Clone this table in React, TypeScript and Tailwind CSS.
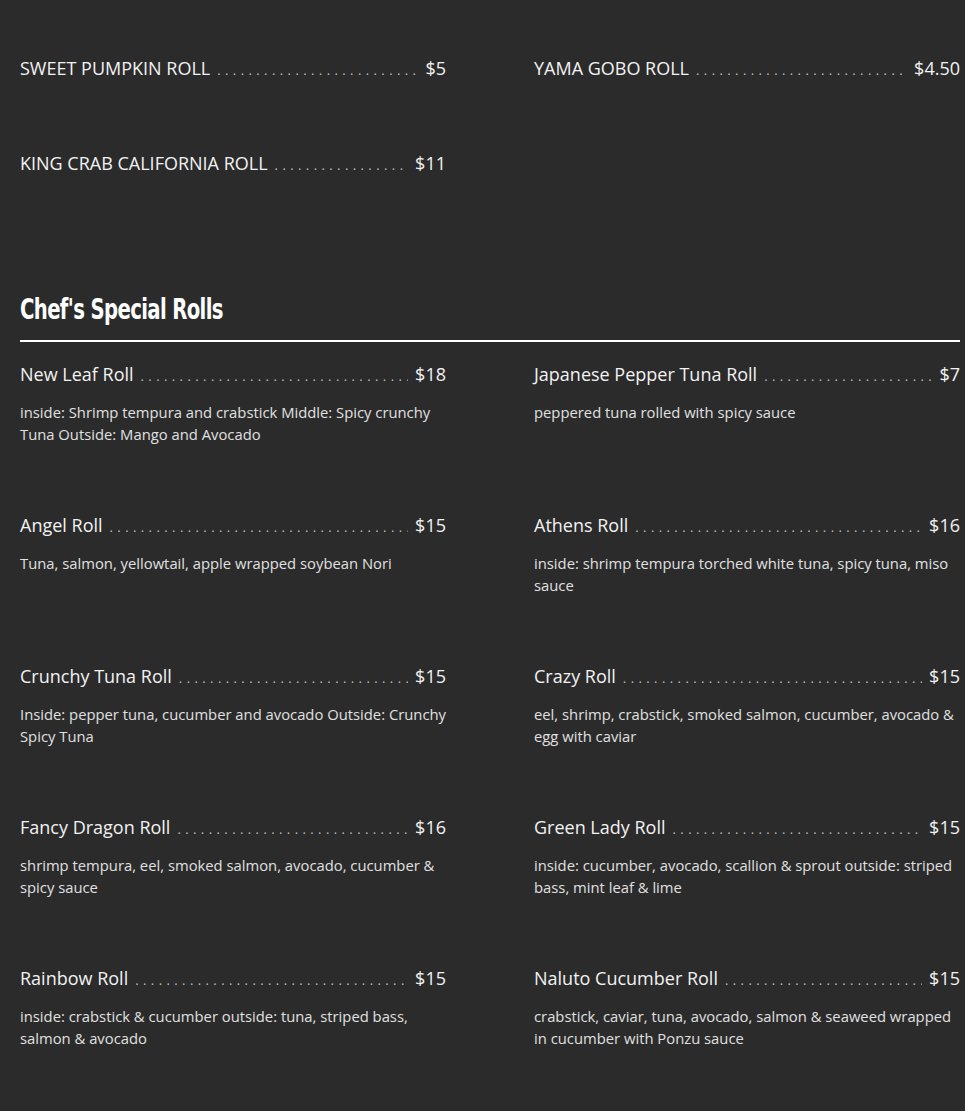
const topRolls = [
  { name: "SWEET PUMPKIN ROLL", price: "$5" },
  { name: "YAMA GOBO ROLL", price: "$4.50" },
  { name: "KING CRAB CALIFORNIA ROLL", price: "$11" },
];

const specialRolls = [
  {
    name: "New Leaf Roll",
    price: "$18",
    desc: "inside: Shrimp tempura and crabstick Middle: Spicy crunchy Tuna Outside: Mango and Avocado",
  },
  {
    name: "Japanese Pepper Tuna Roll",
    price: "$7",
    desc: "peppered tuna rolled with spicy sauce",
  },
  {
    name: "Angel Roll",
    price: "$15",
    desc: "Tuna, salmon, yellowtail, apple wrapped soybean Nori",
  },
  {
    name: "Athens Roll",
    price: "$16",
    desc: "inside: shrimp tempura torched white tuna, spicy tuna, miso sauce",
  },
  {
    name: "Crunchy Tuna Roll",
    price: "$15",
    desc: "Inside: pepper tuna, cucumber and avocado Outside: Crunchy Spicy Tuna",
  },
  {
    name: "Crazy Roll",
    price: "$15",
    desc: "eel, shrimp, crabstick, smoked salmon, cucumber, avocado & egg with caviar",
  },
  {
    name: "Fancy Dragon Roll",
    price: "$16",
    desc: "shrimp tempura, eel, smoked salmon, avocado, cucumber & spicy sauce",
  },
  {
    name: "Green Lady Roll",
    price: "$15",
    desc: "inside: cucumber, avocado, scallion & sprout outside: striped bass, mint leaf & lime",
  },
  {
    name: "Rainbow Roll",
    price: "$15",
    desc: "inside: crabstick & cucumber outside: tuna, striped bass, salmon & avocado",
  },
  {
    name: "Naluto Cucumber Roll",
    price: "$15",
    desc: "crabstick, caviar, tuna, avocado, salmon & seaweed wrapped in cucumber with Ponzu sauce",
  },
];

const DOTS = ".".repeat(120);

const NameRow = ({ name, price }: { name: string; price: string }) => (
  <div className="flex items-baseline text-[18px] leading-[25px] text-[#f2f2f2]">
    <span className="whitespace-nowrap">{name}</span>
    <span className="flex-1 overflow-hidden whitespace-nowrap mx-[7px] text-[13px] tracking-[4.4px] text-[#bdbdbd]">
      {DOTS}
    </span>
    <span className="whitespace-nowrap">{price}</span>
  </div>
);

export default function App() {
  return (
    <div className="min-h-screen bg-[#2b2b2b] pl-5 pr-[5px] font-['Open_Sans',sans-serif]">
      <div className="grid grid-cols-2 gap-x-[88px] pt-[56px]">
        {topRolls.map((r, i) => (
          <div key={i} className="h-[95px]">
            <NameRow name={r.name} price={r.price} />
          </div>
        ))}
      </div>

      <div className="pt-[47px]">
        <h2 className="origin-left scale-x-[0.78] whitespace-nowrap font-['DejaVu_Sans',sans-serif] font-stretch-condensed font-bold text-[28px] leading-[34px] text-white tracking-[-0.8px]">
          Chef's Special Rolls
        </h2>
        <div className="mt-[13px] h-[2px] bg-white" />
      </div>

      <div className="grid grid-cols-2 gap-x-[88px] pt-[20px]">
        {specialRolls.map((r, i) => (
          <div key={i} className="h-[151px]">
            <NameRow name={r.name} price={r.price} />
            <p className="mt-[12px] text-[14.8px] leading-[22px] text-[#e0e0e0]">{r.desc}</p>
          </div>
        ))}
      </div>
    </div>
  );
}
